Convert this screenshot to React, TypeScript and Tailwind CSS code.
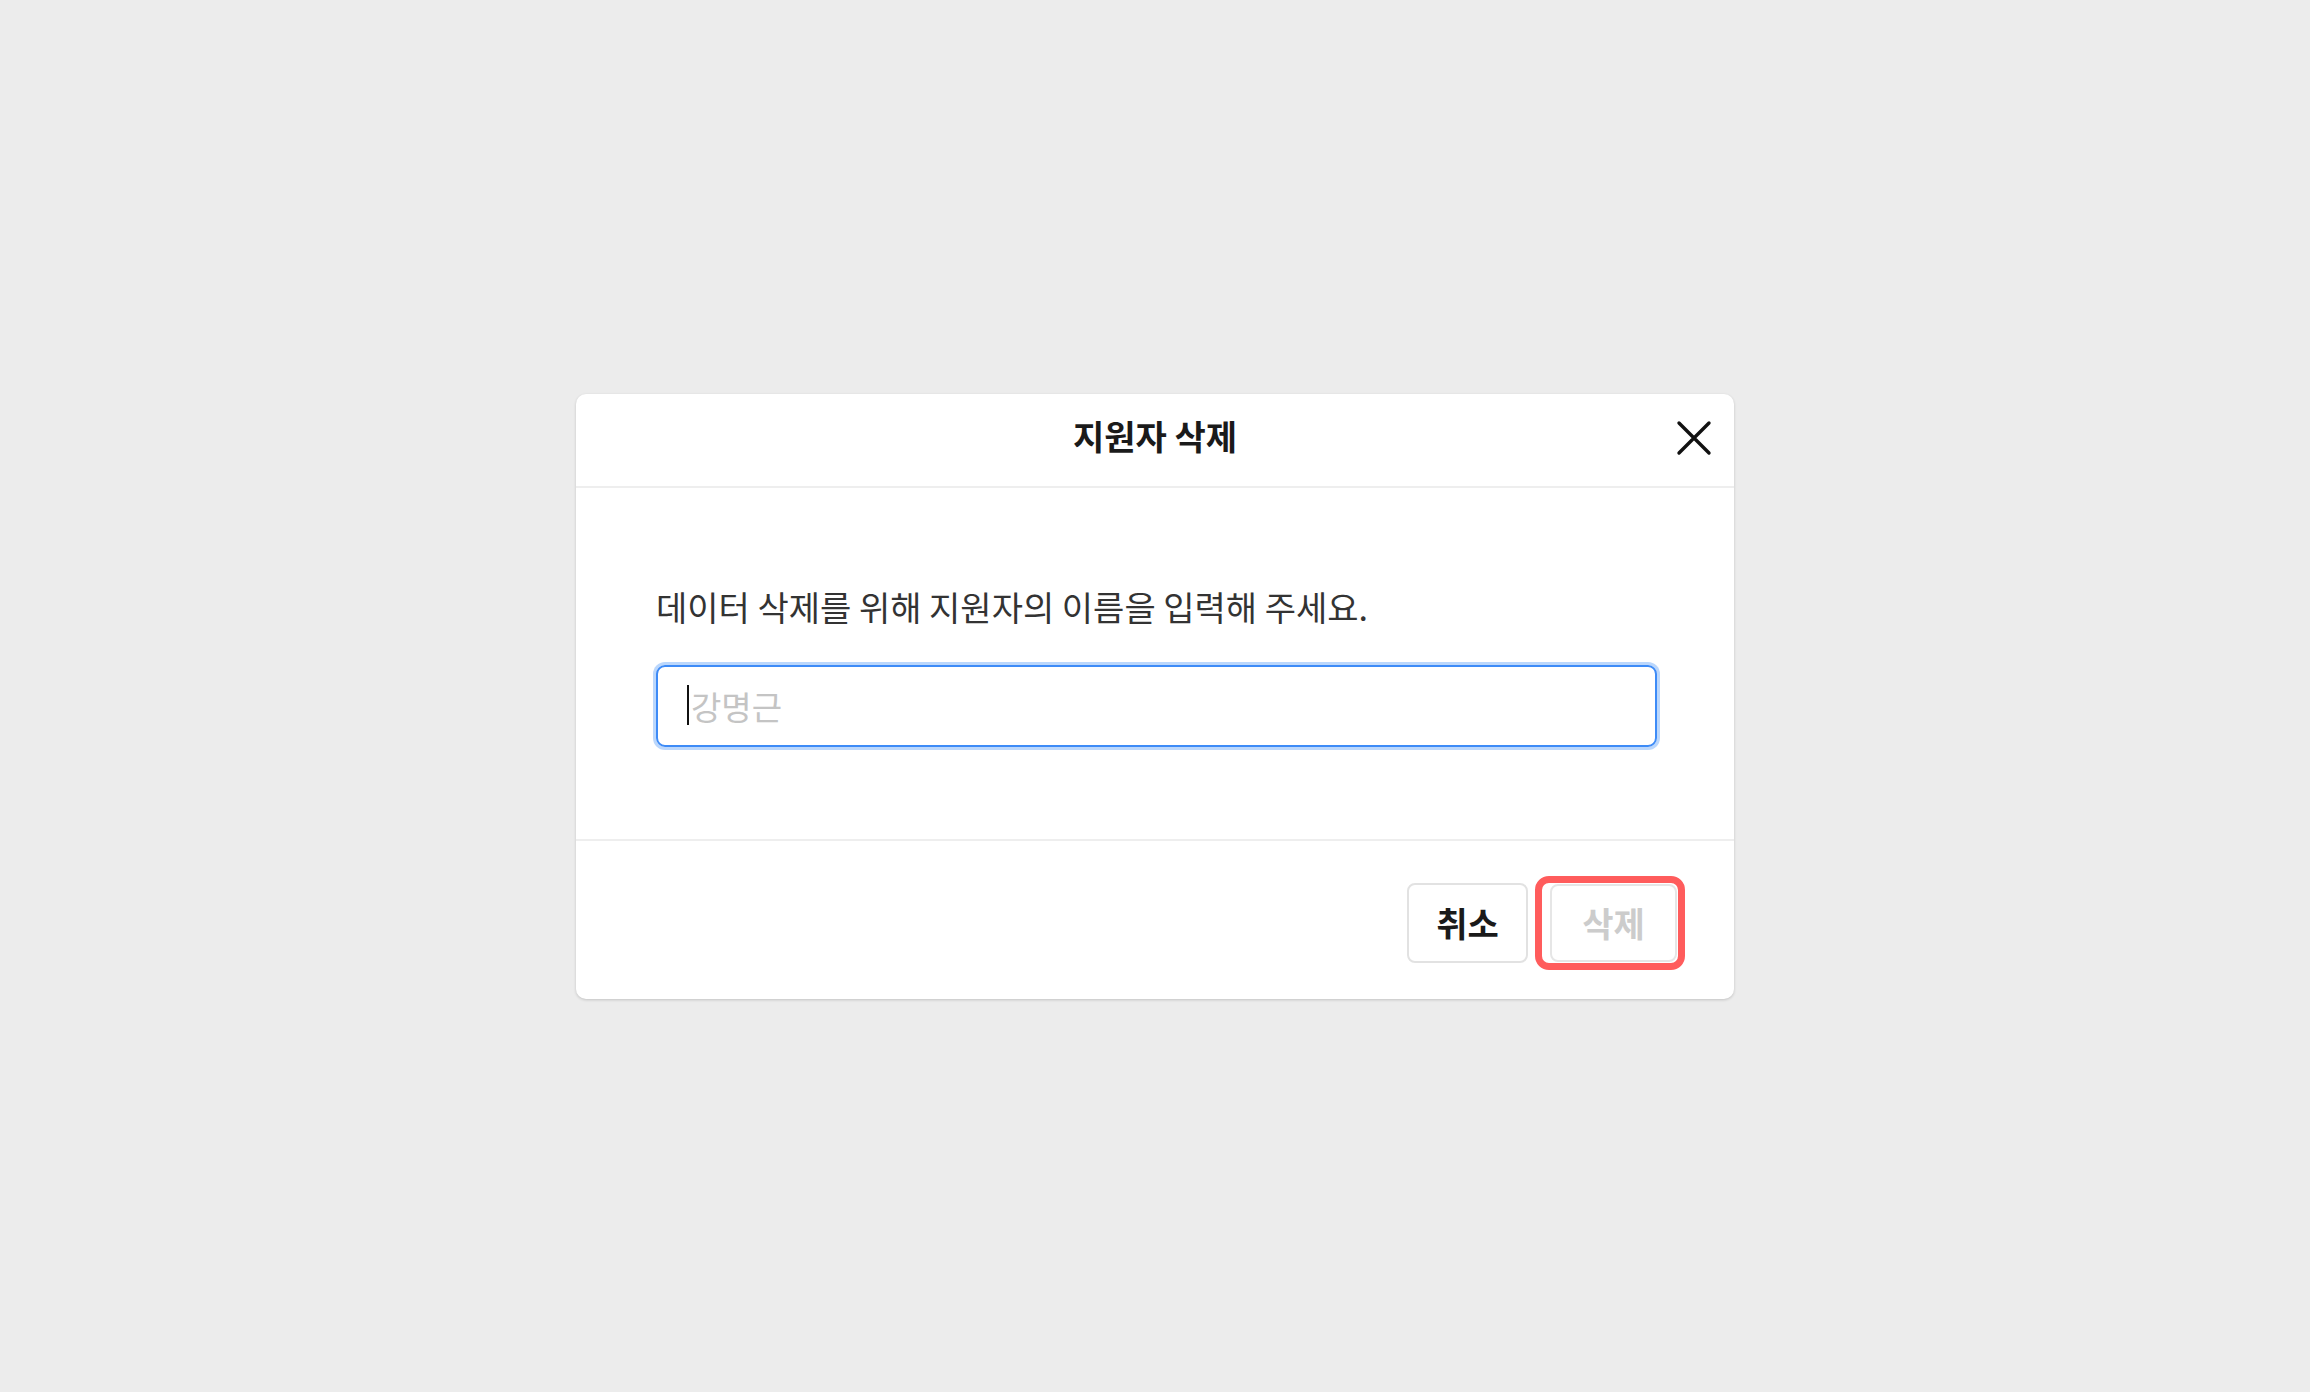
import { useState } from "react";

const font = { fontFamily: '"Noto Sans CJK KR", "Noto Sans", sans-serif' };

function CloseIcon() {
  return (
    <svg width="36" height="36" viewBox="0 0 36 36" fill="none">
      <path d="M3 3L33 33M33 3L3 33" stroke="#111" strokeWidth="3.4" strokeLinecap="round" />
    </svg>
  );
}

export default function App() {
  const [name, setName] = useState("");

  return (
    <div className="flex min-h-screen w-full items-center justify-center bg-[#ececec]" style={font}>
      {/* Delete applicant dialog */}
      <div className="w-[1158px] overflow-hidden rounded-[10px] bg-white shadow-[0_1px_3px_rgba(0,0,0,0.18)]">
        <div className="relative flex h-[94px] items-center justify-center border-b-2 border-[#eeeeee]">
          <h2 className="pb-[8px] text-[34px] font-bold leading-none text-[#1a1a1a]">지원자 삭제</h2>
          <button className="absolute right-[22px] top-[26px] flex h-[36px] w-[36px] items-center justify-center">
            <CloseIcon />
          </button>
        </div>

        <div className="border-b-2 border-[#eeeeee] pb-[92px] pl-[80px] pr-[77px] pt-[99px]">
          <p className="text-[34px] leading-[40px] text-[#333333]">
            데이터 삭제를 위해 지원자의 이름을 입력해 주세요.
          </p>
          <div className="relative mt-[38px]">
            <input
              value={name}
              onChange={(e) => setName(e.target.value)}
              placeholder="강명근"
              className="h-[82px] w-full rounded-[9px] border-2 border-[#3d8bf7] pl-[33px] text-[33px] text-[#222] shadow-[0_0_0_3px_rgba(61,139,247,0.35)] outline-none placeholder:text-[#c4c4c4]"
            />
            {name === "" && (
              <span className="absolute left-[31px] top-[20px] h-[40px] w-[2px] bg-[#111]" />
            )}
          </div>
        </div>

        <div className="flex items-center justify-end gap-[7px] pb-[29px] pr-[49px] pt-[35px]">
          <button className="h-[80px] w-[121px] rounded-[8px] border-2 border-[#e2e2e2] text-[34px] font-bold text-[#1a1a1a]">
            취소
          </button>
          {/* highlighted confirm action */}
          <span className="rounded-[14px] border-[7px] border-[#ff5c5c] py-[1px] pl-[8px] pr-[1px]">
            <button
              disabled
              className="block h-[78px] w-[127px] rounded-[8px] border-2 border-[#e6e6e6] text-[34px] font-bold text-[#cccccc]"
            >
              삭제
            </button>
          </span>
        </div>
      </div>
    </div>
  );
}
